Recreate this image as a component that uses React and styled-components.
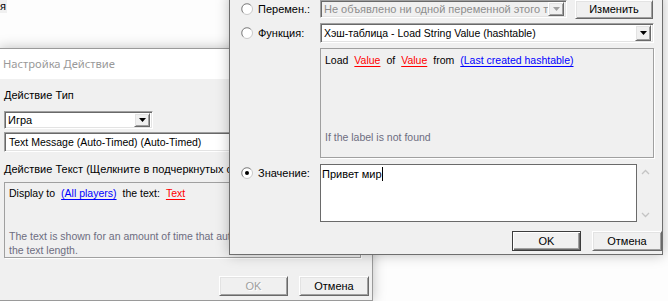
import React from 'react';
import styled, { createGlobalStyle, css } from 'styled-components';

const Global = createGlobalStyle`
  html, body { margin: 0; padding: 0; }
  body {
    width: 668px; height: 301px; overflow: hidden; background: #fff;
    font-family: "Liberation Sans", Arial, sans-serif; font-size: 10.5px; color: #000;
  }
`;

const sunken = css`
  border: 1px solid;
  border-color: #a0a0a0 #fff #fff #a0a0a0;
  box-shadow: inset 1px 1px 0 #696969, inset -1px -1px 0 #e3e3e3;
`;

const raised = css`
  border: 1px solid;
  border-color: #fff #696969 #696969 #fff;
  box-shadow: inset 1px 1px 0 #e3e3e3, inset -1px -1px 0 #a0a0a0;
`;

const Desktop = styled.div`
  position: relative;
  width: 668px; height: 301px;
  overflow: hidden;
  background: #fdfdfd;
`;

const BackLabel = styled.span`
  position: absolute; left: 0; top: 0;
  height: 13px; padding: 0 1px 0 0;
  background: #f0f0f0;
  line-height: 13px;
  font-size: 11px;
`;

const Window = styled.div`
  position: absolute;
  left: ${p => p.$left}px; top: ${p => p.$top}px;
  width: ${p => p.$w}px; height: ${p => p.$h}px;
  box-sizing: border-box;
  background: #f0f0f0;
  border: 1px solid ${p => p.$border};
  box-shadow: 0 0 12px rgba(0, 0, 0, 0.25);
  display: flex; flex-direction: column;
  overflow: hidden;
  z-index: ${p => p.$z};
`;

const TitleBar = styled.div`
  height: 30px; flex: none;
  background: #fff;
  padding-left: 3px;
  line-height: 30px;
  font-family: "Noto Sans", "Open Sans", sans-serif;
  font-size: 11.2px;
  color: #999;
`;

const LeftBody = styled.div`
  display: flex; flex-direction: column;
  padding: 0 3px 0 4px;
`;

const Label = styled.div`
  height: 13px; line-height: 13px;
  margin-top: ${p => p.$mt || 0}px;
  white-space: nowrap;
  font-size: 11px;
`;

const Combo = styled.div`
  ${sunken};
  box-sizing: border-box;
  width: ${p => p.$w ? `${p.$w}px` : 'auto'};
  flex: ${p => p.$w ? 'none' : '1'};
  height: ${p => p.$h || 18}px;
  margin-top: ${p => p.$mt || 0}px;
  background: ${p => p.$disabled ? '#f0f0f0' : '#fff'};
  color: ${p => p.$disabled ? '#8d8d8d' : '#000'};
  font-size: ${p => p.$fs || 10.5}px;
  display: flex; align-items: center;
  padding: 0 2px 0 3px;
  overflow: hidden;
  white-space: nowrap;
`;

const ComboText = styled.span`
  flex: 1; overflow: hidden; white-space: nowrap;
`;

const DropBtn = styled.span`
  ${raised};
  box-sizing: border-box;
  width: 16px; height: ${p => p.$h || 14}px; flex: none;
  background: #f0f0f0;
  display: flex; align-items: center; justify-content: center;
`;

const Field = styled.div`
  ${sunken};
  box-sizing: border-box;
  width: ${p => p.$w}px; height: 20px;
  margin-top: ${p => p.$mt || 0}px;
  background: #fff;
  padding: 0 4px;
  line-height: 18px;
  white-space: nowrap; overflow: hidden;
`;

const Panel = styled.div`
  box-sizing: border-box;
  width: ${p => p.$w ? `${p.$w}px` : 'auto'};
  flex: ${p => p.$w ? 'none' : '1'};
  height: ${p => p.$h}px;
  margin-top: ${p => p.$mt || 0}px;
  border: 1px solid #a0a0a0;
  box-shadow: 1px 1px 0 #fff;
  padding: ${p => p.$pt}px 4px 0 4px;
  display: flex; flex-direction: column;
  overflow: hidden;
`;

const Line = styled.div`
  height: 13px; line-height: 13px; white-space: nowrap;
  display: flex;
  gap: ${p => p.$gap || 0}px;
`;

const Desc = styled.div`
  margin-top: ${p => p.$mt}px;
  color: #6d6d80;
  line-height: 14px;
  white-space: nowrap;
`;

const Link = styled.span`
  color: ${p => p.$red ? '#ff0000' : '#0000ff'};
  text-decoration: underline;
  text-underline-offset: 2px;
`;

const ButtonRow = styled.div`
  display: flex; justify-content: flex-end;
  gap: ${p => p.$gap}px;
  margin-top: ${p => p.$mt}px;
`;

const Button = styled.div`
  box-sizing: border-box;
  width: ${p => p.$w}px; height: ${p => p.$h || 20}px;
  background: #f0f0f0;
  display: flex; align-items: center; justify-content: center;
  font-size: 11px;
  flex: none;
  ${p => p.$default ? css`
    border: 1px solid #3c3c3c;
    box-shadow: inset 1px 1px 0 #fff, inset -1px -1px 0 #696969, inset -2px -2px 0 #a0a0a0;
  ` : raised};
  ${p => p.$disabled && css`
    color: #a0a0a0;
    text-shadow: 1px 1px 0 #fff;
  `}
`;

const FrontBody = styled.div`
  display: flex; flex-direction: column;
  padding-top: 5px;
`;

const Row = styled.div`
  display: flex;
  align-items: ${p => p.$top ? 'flex-start' : 'center'};
  margin-top: ${p => p.$mt || 0}px;
  padding-right: 8px;
  height: ${p => p.$h}px;
`;

const Choice = styled.div`
  width: 90px; flex: none;
  display: flex; align-items: center; gap: 5px;
  padding-left: 11px;
  box-sizing: border-box;
  padding-top: ${p => p.$pt || 0}px;
  font-size: 11px;
`;

const FieldCol = styled.div`
  flex: 1;
  display: flex; align-items: center; gap: ${p => p.$gap || 0}px;
  height: 100%;
`;

const TextArea = styled.div`
  box-sizing: border-box;
  width: 317px; height: 58px; flex: none;
  border: 1px solid #6a6a6a;
  background: #fff;
  padding: 2px 1px;
  line-height: 14px;
  font-size: 11px;
  display: flex; align-items: flex-start;
`;

const Caret = styled.span`
  display: inline-block;
  width: 1px; height: 14px;
  background: #000;
`;

const ScrollCol = styled.div`
  width: 16px; height: 58px; flex: none;
  display: flex; flex-direction: column; justify-content: space-between; align-items: center;
  padding: 5px 0 4px;
  box-sizing: border-box;
`;

const Svg = styled.svg`display: block; flex: none;`;

const Arrow = ({ color = '#000' }) => (
  <Svg width="7" height="4" viewBox="0 0 7 4"><path d="M0 0H7L3.5 4Z" fill={color} /></Svg>
);

const Chevron = ({ up }) => (
  <Svg width="9" height="6" viewBox="0 0 9 6">
    <path d={up ? 'M1 5L4.5 1.5L8 5' : 'M1 1L4.5 4.5L8 1'} fill="none" stroke="#c4c4c4" strokeWidth="1.3" />
  </Svg>
);

const Radio = ({ checked }) => (
  <Svg width="12" height="12" viewBox="0 0 12 12">
    <circle cx="6" cy="6" r="5.5" fill="#fff" stroke="#c8c8c8" />
    <path d="M2.3 9.7A5.2 5.2 0 0 1 9.7 2.3" fill="none" stroke="#8a8a8a" strokeWidth="1" />
    {checked && <circle cx="6" cy="6" r="2" fill="#000" />}
  </Svg>
);

export default function App() {
  return (
    <>
      <Global />
      <Desktop>
        <BackLabel>я</BackLabel>

        <Window $left={-1} $top={48} $w={374} $h={253} $border="#9a9a9a" $z={1}>
          <TitleBar>Настройка Действие</TitleBar>
          <LeftBody>
            <Label $mt={10}>Действие Тип</Label>
            <Combo $w={149} $mt={9} $fs={11}>
              <ComboText>Игра</ComboText>
              <DropBtn><Arrow /></DropBtn>
            </Combo>
            <Field $w={357} $mt={3}>Text Message (Auto-Timed) (Auto-Timed)</Field>
            <Label $mt={11}>Действие Текст (Щелкните в подчеркнутых словах)</Label>
            <Panel $w={357} $h={76} $mt={6} $pt={4}>
              <Line $gap={6}>
                <span>Display to</span>
                <Link>(All players)</Link>
                <span>the text:</span>
                <Link $red>Text</Link>
              </Line>
              <Desc $mt={29}>
                The text is shown for an amount of time that automatically depends on<br />
                the text length.
              </Desc>
            </Panel>
            <ButtonRow $gap={11} $mt={18}>
              <Button $w={69} $disabled>OK</Button>
              <Button $w={70}>Отмена</Button>
            </ButtonRow>
          </LeftBody>
        </Window>

        <Window $left={229} $top={-6} $w={434} $h={261} $border="#6e6e6e" $z={2}>
          <FrontBody>
            <Row $h={18}>
              <Choice><Radio /><span>Перемен.:</span></Choice>
              <FieldCol $gap={8}>
                <Combo $w={247} $h={18} $disabled $fs={11}>
                  <ComboText>Не объявлено ни одной переменной этого типа</ComboText>
                  <DropBtn $h={14}><Arrow color="#a0a0a0" /></DropBtn>
                </Combo>
                <Button $w={78} $h={19}>Изменить</Button>
              </FieldCol>
            </Row>
            <Row $h={20} $mt={5}>
              <Choice><Radio /><span>Функция:</span></Choice>
              <FieldCol>
                <Combo $h={20}>
                  <ComboText>Хэш-таблица - Load String Value (hashtable)</ComboText>
                  <DropBtn $h={16}><Arrow /></DropBtn>
                </Combo>
              </FieldCol>
            </Row>
            <Row $h={110} $mt={5} $top>
              <Choice />
              <FieldCol>
                <Panel $h={110} $pt={5}>
                  <Line $gap={6}>
                    <span>Load</span>
                    <Link $red>Value</Link>
                    <span>of</span>
                    <Link $red>Value</Link>
                    <span>from</span>
                    <Link>(Last created hashtable)</Link>
                  </Line>
                  <Desc $mt={63}>If the label is not found</Desc>
                </Panel>
              </FieldCol>
            </Row>
            <Row $h={58} $mt={6} $top>
              <Choice $pt={3}><Radio checked /><span>Значение:</span></Choice>
              <FieldCol>
                <TextArea>Привет мир<Caret /></TextArea>
                <ScrollCol>
                  <Chevron up />
                  <Chevron />
                </ScrollCol>
              </FieldCol>
            </Row>
            <ButtonRow $gap={11} $mt={9}>
              <Button $w={69} $default>OK</Button>
              <Button $w={70}>Отмена</Button>
            </ButtonRow>
          </FrontBody>
        </Window>
      </Desktop>
    </>
  );
}
